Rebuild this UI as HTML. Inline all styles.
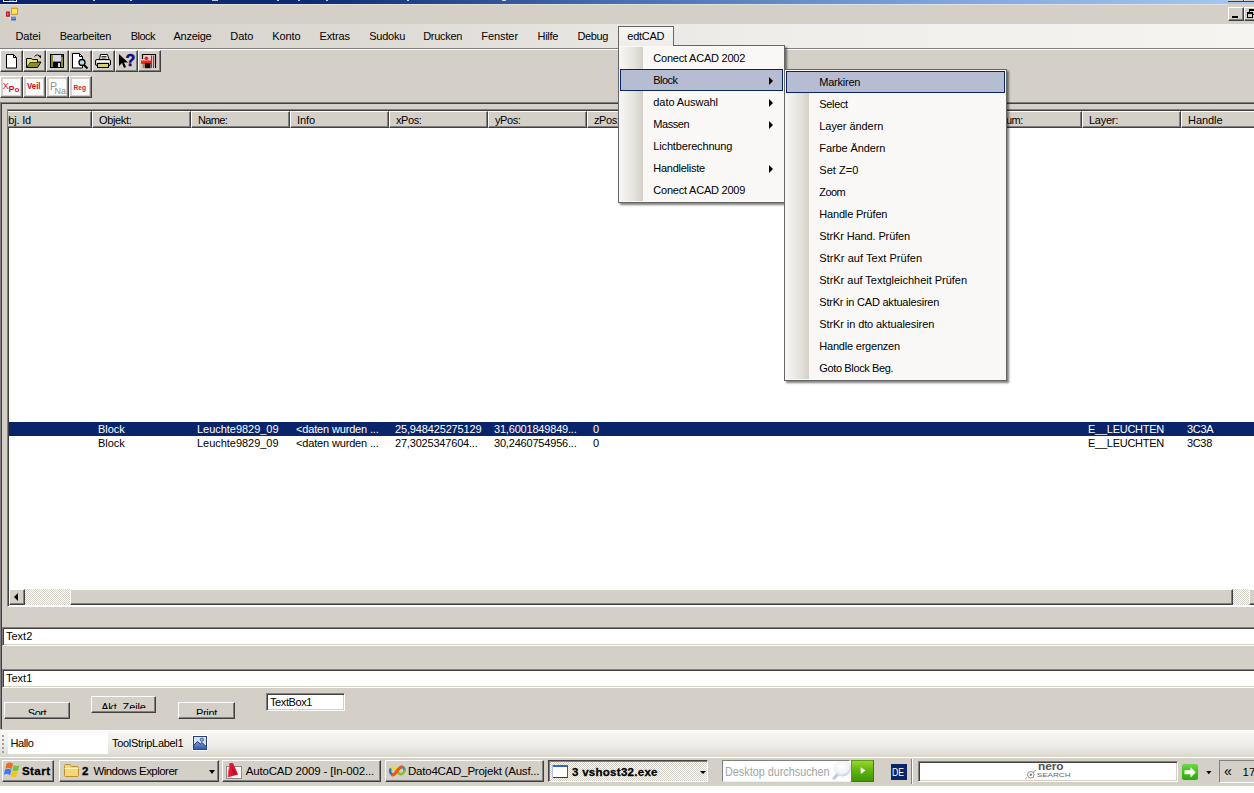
<!DOCTYPE html>
<html><head><meta charset="utf-8"><title>edtCAD</title>
<style>
*{box-sizing:border-box;margin:0;padding:0}
html,body{width:1254px;height:793px;overflow:hidden;background:#fff}
body{position:relative;font:11px "Liberation Sans",sans-serif;color:#000}
.a{position:absolute;white-space:nowrap}
#win{left:0;top:0;width:1254px;height:786px;background:#d4d0c8;overflow:hidden}
#title{left:0;top:0;width:1254px;height:4px;background:linear-gradient(90deg,#0a246a 0%,#0e2c76 25%,#4a70b4 50%,#7ea4dc 75%,#a6caf0 100%)}
#title i{position:absolute;top:0;height:1px;background:#fff;opacity:.75}
#menubar{left:0;top:24px;width:1254px;height:24px;background:linear-gradient(90deg,#d4d0c8 0%,#dedbd5 30%,#efede9 60%,#f5f4f1 100%)}
.mi{top:30px;line-height:13px}
.raised{border:1px solid;border-color:#fff #404040 #404040 #fff;box-shadow:inset -1px -1px 0 #808080}
.sunk{border:1px solid;border-color:#808080 #fff #fff #808080;box-shadow:inset 1px 1px 0 #404040,inset -1px -1px 0 #d4d0c8}
.tb{width:23px;height:22px;background:#d4d0c8;border:1px solid;border-color:#fff #404040 #404040 #fff;box-shadow:inset -1px -1px 0 #808080}
.tb svg{position:absolute;left:0;top:0}
.hd{top:1px;width:99px;height:17px;background:#d4d0c8;border:1px solid;border-color:#fff #404040 #404040 #fff;box-shadow:inset -1px -1px 0 #808080;padding-left:6px;line-height:16px;overflow:hidden}
.row{left:1px;width:1260px;height:14px;line-height:14px}
.rsel{background:#0a246a;color:#fff}
.tbx{background:#fff;padding:2px 0 0 3px;line-height:13px;overflow:hidden}
.btn{background:#d4d0c8;text-align:center;overflow:hidden;line-height:13px}
.tk{font-size:11.5px;line-height:14px}
.dd{background:#f9f8f7;border:1px solid #666;box-shadow:2px 2px 2px rgba(0,0,0,.5)}
.dd .marg{position:absolute;left:1px;top:1px;bottom:1px;width:23px;background:linear-gradient(90deg,#f7f6f4 0%,#e6e3de 60%,#d4d0c8 100%)}
.dd .it{position:absolute;left:1px;right:1px;height:22px;line-height:23px;padding-left:33.3px}
.dd .sel{background:#b6bdd2;border:1px solid #0a246a;line-height:21px;padding-left:32.3px}
.arr{position:absolute;right:10px;top:7.5px;width:0;height:0;border:4px solid transparent;border-left:4px solid #000;border-right:0}
.sel .arr{top:6.5px;right:9px}
</style></head><body>
<div id="win" class="a">
<div id="title" class="a"><i style="left:93px;width:2px"></i><i style="left:130px;width:2px"></i><i style="left:212px;width:6px"></i><i style="left:277px;width:2px"></i><i style="left:298px;width:2px"></i><i style="left:326px;width:2px"></i><i style="left:407px;width:2px"></i><i style="left:502px;width:4px"></i></div>
<div class="a" style="left:0;top:4px;width:1228px;height:1px;background:#e2e0da"></div>
<div class="a" style="left:3px;top:0;width:14px;height:2px;background:#e8ecff"></div><div class="a" style="left:4px;top:0;width:12px;height:1px;background:#101030"></div><div class="a" style="left:9px;top:0;width:5px;height:1px;background:#3050c0"></div>
<svg class="a" style="left:5px;top:7px" width="15" height="15" viewBox="0 0 15 15"><rect x="1.100" y="4.500" width="3.700" height="5.200" fill="#b00818"/><rect x="2" y="5.500" width="1.600" height="3" fill="#f86070"/><rect x="6.100" y=".7" width="6.800" height="7.100" fill="#c89808"/><rect x="7" y="1.800" width="5" height="5" fill="#ffe058"/><rect x="6" y="9.700" width="5" height="3.600" fill="#5c8ce8"/><rect x="6" y="12" width="5" height="1.300" fill="#4068c0"/><path d="M5 10.500v2h1" stroke="#f0f0f0" stroke-width=".8" fill="none"/></svg>
<div class="a" style="left:1228px;top:0;width:26px;height:1px;background:#d4d0c8"></div><div class="a" style="left:1228px;top:1px;width:26px;height:1px;background:#404040"></div><div class="a" style="left:1243px;top:0;width:1px;height:2px;background:#404040"></div><div class="a" style="left:1244px;top:0;width:1px;height:1px;background:#fff"></div>
<div class="a" style="left:1228px;top:7px;width:16px;height:14px;background:#d4d0c8;border:1px solid;border-color:#fff #404040 #404040 #fff;box-shadow:inset -1px -1px 0 #808080"><div class="a" style="left:3px;top:8px;width:6px;height:2px;background:#000"></div></div>
<div class="a" style="left:1244px;top:7px;width:15px;height:14px;background:#d4d0c8;border:1px solid;border-color:#fff #404040 #404040 #fff;box-shadow:inset -1px -1px 0 #808080"><div class="a" style="left:4px;top:1px;width:6px;height:6px;border:1px solid #000;border-top-width:2px"></div><div class="a" style="left:2px;top:4px;width:6px;height:6px;border:1px solid #000;border-top-width:2px;background:#d4d0c8"></div></div>

<div id="menubar" class="a"></div>
<div class="a mi" style="left:15.5px;letter-spacing:-0.14px">Datei</div>
<div class="a mi" style="left:59.7px;letter-spacing:-0.17px">Bearbeiten</div>
<div class="a mi" style="left:130.7px;letter-spacing:-0.52px">Block</div>
<div class="a mi" style="left:173.5px;letter-spacing:-0.27px">Anzeige</div>
<div class="a mi" style="left:230.3px;letter-spacing:-0.06px">Dato</div>
<div class="a mi" style="left:272.2px;letter-spacing:-0.09px">Konto</div>
<div class="a mi" style="left:319.5px;letter-spacing:-0.11px">Extras</div>
<div class="a mi" style="left:369.3px;letter-spacing:-0.27px">Sudoku</div>
<div class="a mi" style="left:423.2px;letter-spacing:-0.28px">Drucken</div>
<div class="a mi" style="left:481.3px;letter-spacing:-0.09px">Fenster</div>
<div class="a mi" style="left:537.5px;letter-spacing:-0.30px">Hilfe</div>
<div class="a mi" style="left:577.5px;letter-spacing:-0.38px">Debug</div>
<div class="a" style="left:0;top:48px;width:1254px;height:1px;background:#808080"></div><div class="a" style="left:0;top:49px;width:1254px;height:1px;background:#fff"></div>
<div class="a tb" style="left:0px;top:50px;background:#d4d0c8"><svg width="21" height="20" viewBox="0 0 21 20"><path d="M5.500 3.500h7l3 3v10.500h-10z" fill="#fff" stroke="#000"/><path d="M12.500 3.500v3h3" fill="none" stroke="#000"/></svg></div>

<div class="a tb" style="left:23px;top:50px;background:#d4d0c8"><svg width="21" height="20" viewBox="0 0 21 20"><path d="M2.500 7.500h5l1 1h5v3" fill="#d8d860" stroke="#000"/><path d="M2.500 16.500v-9" stroke="#000"/><path d="M2.500 16.500l3.500-5.500h11l-3.500 5.500z" fill="#8c8c20" stroke="#000"/><path d="M3.500 15v-6.500h3.500l1 1h5v1.500h-7z" fill="#e6e65a"/><path d="M10.500 5.500c1.500-2 4-2 5 0" fill="none" stroke="#000"/><path d="M14 4.500h3v3z" fill="#000"/></svg></div>

<div class="a tb" style="left:46px;top:50px;background:#d4d0c8"><svg width="21" height="20" viewBox="0 0 21 20"><rect x="3.500" y="3.500" width="13" height="13" fill="#8c8c28" stroke="#000"/><rect x="6" y="4" width="8" height="6" fill="#d8d8e8"/><rect x="6" y="11" width="8" height="6" fill="#000"/><rect x="11" y="12" width="2" height="4" fill="#d8d8d8"/><rect x="14.500" y="4" width="1" height="2" fill="#000"/></svg></div>

<div class="a tb" style="left:69px;top:50px;background:#d4d0c8"><svg width="21" height="20" viewBox="0 0 21 20"><path d="M2.500 2.500h7l3 3v11.500h-10z" fill="#fff" stroke="#000"/><path d="M9.500 2.500v3h3" fill="none" stroke="#000"/><circle cx="12" cy="11.500" r="3" fill="#a8e0e0" stroke="#000" stroke-width="1.300"/><path d="M14 14l3.500 3.500" stroke="#000" stroke-width="2"/></svg></div>

<div class="a tb" style="left:92px;top:50px;background:#d4d0c8"><svg width="21" height="20" viewBox="0 0 21 20"><path d="M6.500 8.500l1-5h7l1.500 5z" fill="#fff" stroke="#000"/><path d="M8.500 5.500h5M8.500 7h5" stroke="#000" stroke-width=".8"/><rect x="2.500" y="8.500" width="15" height="6" rx="1.500" fill="#d4d0c8" stroke="#000"/><rect x="4.500" y="12.500" width="11" height="4" fill="#c8c8a0" stroke="#000"/><rect x="9" y="13" width="5" height="3" fill="#d8d860"/><path d="M3.500 10.500h13" stroke="#fff"/></svg></div>

<div class="a tb" style="left:115px;top:50px;background:#d4d0c8"><svg width="21" height="20" viewBox="0 0 21 20"><path d="M3 3v12l3-3 2 5 2-1-2-4.500h4z" fill="#000"/><text x="9.500" y="15" font-family="Liberation Sans,sans-serif" font-weight="bold" font-size="16" fill="#0c0c84" stroke="#0c0c84" stroke-width=".5">?</text></svg></div>

<div class="a tb" style="left:138px;top:50px;background:#d4d0c8"><svg width="21" height="20" viewBox="0 0 21 20"><rect x="3.500" y="3.500" width="13" height="13.500" fill="#e4d4d0"/><path d="M3.500 8v-4.500h13v13.500" fill="none" stroke="#100000" stroke-width="1.200"/><path d="M12.500 4.500v12.500M14.500 4.500v12.500" stroke="#d01828" stroke-width="1.100"/><rect x="2" y="9.500" width="10.500" height="3.500" rx="1" fill="#ec2810"/><circle cx="7.400" cy="7.300" r="1.900" fill="#f02030"/><rect x="6" y="12.200" width="5.500" height="5" fill="#180404"/><rect x="3.500" y="13" width="2.500" height="4" fill="#a88858"/></svg></div>

<div class="a tb" style="left:0px;top:76px;background:#d4d0c8"><svg width="21" height="20" viewBox="0 0 21 20"><rect x="2" y="2" width="17" height="16" fill="#fdfcfc"/><text x="1.800" y="11.800" font-family="Liberation Sans,sans-serif" font-size="9" fill="#e01030">X</text><text x="7.500" y="15" font-family="Liberation Sans,sans-serif" font-weight="bold" font-size="9" fill="#e01030">P</text><text x="13.500" y="15" font-family="Liberation Sans,sans-serif" font-weight="bold" font-size="8" fill="#e01030">o</text></svg></div>

<div class="a tb" style="left:23px;top:76px;background:#d4d0c8"><svg width="21" height="20" viewBox="0 0 21 20"><rect x="2" y="2" width="17" height="16" fill="#fdfcfc"/><text x="3" y="12.300" font-family="Liberation Sans,sans-serif" font-weight="bold" font-size="8.500" fill="#d00020" textLength="13.500" lengthAdjust="spacingAndGlyphs">Veil</text></svg></div>

<div class="a tb" style="left:46px;top:76px;background:#d4d0c8"><svg width="21" height="20" viewBox="0 0 21 20"><rect x="2" y="2" width="17" height="16" fill="#fdfcfc"/><text x="3" y="13" font-family="Liberation Sans,sans-serif" font-size="10.500" fill="#909090">P</text><text x="7.500" y="16.700" font-family="Liberation Sans,sans-serif" font-size="9" fill="#909090">Na</text></svg></div>

<div class="a tb" style="left:69px;top:76px;background:#d4d0c8"><svg width="21" height="20" viewBox="0 0 21 20"><rect x="2" y="2" width="17" height="16" fill="#fdfcfc"/><text x="3.500" y="13" font-family="Liberation Sans,sans-serif" font-weight="bold" font-size="7.500" fill="#d01830" textLength="12.500" lengthAdjust="spacingAndGlyphs">Reg</text></svg></div>

<div class="a" style="left:0;top:102px;width:1254px;height:1px;background:#808080"></div>
<div class="a" style="left:0;top:103px;width:1254px;height:1px;background:#404040"></div>
<div class="a" style="left:0;top:103px;width:1px;height:626px;background:#808080"></div>
<div class="a" style="left:1px;top:103px;width:1px;height:626px;background:#404040"></div>
<div class="a" id="lv" style="left:7px;top:109px;width:1260px;height:498px;background:#fff;border:1px solid;border-color:#808080 #fff #fff #808080;box-shadow:inset 1px 1px 0 #404040;overflow:hidden">
<div class="a hd" style="left:-15px;letter-spacing:-0.20px">Obj. Id</div><div class="a hd" style="left:84px;letter-spacing:-0.35px">Objekt:</div><div class="a hd" style="left:183px;letter-spacing:-0.62px">Name:</div><div class="a hd" style="left:282px;letter-spacing:-0.06px">Info</div><div class="a hd" style="left:381px;letter-spacing:-0.44px">xPos:</div><div class="a hd" style="left:480px;letter-spacing:-0.44px">yPos:</div><div class="a hd" style="left:579px;letter-spacing:-0.44px">zPos:</div><div class="a hd" style="left:678px;"></div><div class="a hd" style="left:777px;"></div><div class="a hd" style="left:876px;"></div><div class="a hd" style="left:975px;letter-spacing:-0.41px">Datum:</div><div class="a hd" style="left:1074px;letter-spacing:-0.26px">Layer:</div><div class="a hd" style="left:1173px;letter-spacing:-0.06px">Handle</div>
<div class="a row rsel" style="top:312px"><span class="a" style="left:89px;letter-spacing:-0.04px">Block</span><span class="a" style="left:188px;letter-spacing:-0.03px">Leuchte9829_09</span><span class="a" style="left:287px;letter-spacing:-0.16px">&lt;daten wurden ...</span><span class="a" style="left:386px;letter-spacing:-0.15px">25,948425275129</span><span class="a" style="left:485px;letter-spacing:-0.19px">31,6001849849...</span><span class="a" style="left:584px;letter-spacing:-0.12px">0</span><span class="a" style="left:1079px;letter-spacing:-0.26px">E__LEUCHTEN</span><span class="a" style="left:1178px;letter-spacing:-0.31px">3C3A</span></div>
<div class="a row" style="top:326px"><span class="a" style="left:89px;letter-spacing:-0.04px">Block</span><span class="a" style="left:188px;letter-spacing:-0.03px">Leuchte9829_09</span><span class="a" style="left:287px;letter-spacing:-0.16px">&lt;daten wurden ...</span><span class="a" style="left:386px;letter-spacing:-0.19px">27,3025347604...</span><span class="a" style="left:485px;letter-spacing:-0.19px">30,2460754956...</span><span class="a" style="left:584px;letter-spacing:-0.12px">0</span><span class="a" style="left:1079px;letter-spacing:-0.26px">E__LEUCHTEN</span><span class="a" style="left:1178px;letter-spacing:-0.35px">3C38</span></div>
<div class="a" style="left:1px;top:479px;width:1250px;height:16px;background:repeating-conic-gradient(#fff 0 25%,#d4d0c8 0 50%) 0 0/2px 2px"></div>
<div class="a raised" style="left:1px;top:479px;width:16px;height:16px;background:#d4d0c8"><div class="a" style="left:4px;top:3px;width:0;height:0;border:4px solid transparent;border-right:4px solid #000;border-left:0"></div></div>
<div class="a raised" style="left:62px;top:479px;width:1163px;height:16px;background:#d4d0c8"></div>
<div class="a raised" style="left:1241px;top:479px;width:16px;height:16px;background:#d4d0c8"></div>
</div>

<div class="a sunk tbx" style="left:2px;top:627px;width:1260px;height:19px">Text2</div>
<div class="a sunk tbx" style="left:2px;top:669px;width:1260px;height:19px">Text1</div>
<div class="a raised btn" style="left:4px;top:702px;width:66px;height:17px"><div class="a" style="left:2px;right:2px;top:2px;height:10px;overflow:hidden;text-align:center;line-height:16px;letter-spacing:-0.40px">Sort</div></div>
<div class="a raised btn" style="left:91px;top:696px;width:65px;height:17px"><div class="a" style="left:2px;right:2px;top:2px;height:10px;overflow:hidden;text-align:center;line-height:16px;letter-spacing:-0.11px">Akt. Zeile</div></div>
<div class="a raised btn" style="left:178px;top:702px;width:57px;height:17px"><div class="a" style="left:2px;right:2px;top:2px;height:10px;overflow:hidden;text-align:center;line-height:16px;letter-spacing:-0.35px">Print</div></div>
<div class="a sunk tbx" style="left:266px;top:693px;width:79px;height:18px;letter-spacing:-0.41px">TextBox1</div>

<div class="a" style="left:0;top:730px;width:1254px;height:27px;background:linear-gradient(180deg,#fdfcfb 0%,#f5f4f1 15%,#eeece8 55%,#e2dfd8 85%,#d8d5cb 100%)"></div>
<div class="a" style="left:2px;top:735px;width:2px;height:18px;background:repeating-linear-gradient(180deg,#a0a0a0 0 2px,transparent 2px 4px)"></div>
<div class="a" style="left:8px;top:733px;width:100px;height:21px;background:#fff;padding-left:2.500px;line-height:20px;letter-spacing:-0.42px">Hallo</div>
<div class="a" style="left:112px;top:733px;line-height:20px;letter-spacing:-0.30px">ToolStripLabel1</div>
<svg class="a" style="left:192px;top:735px" width="16" height="16" viewBox="0 0 16 16"><defs><linearGradient id="ig" x1="0" y1="0" x2="0" y2="1"><stop offset="0" stop-color="#7c9ce0"/><stop offset="1" stop-color="#2c54a8"/></linearGradient></defs><rect width="16" height="16" fill="#fcfdff"/><rect x="1.500" y="1.500" width="13" height="13" fill="#d4e4fa" stroke="#2c4070"/><path d="M2 10.500l3.500-4 2.800 2.500 1.700-1.500 4.500 4.500v2.500h-12.500z" fill="url(#ig)"/><path d="M2 10l3.500-3.500 2.800 2.500 1.700-1.500 4.500 4.500" fill="none" stroke="#20305c" stroke-width="1"/><circle cx="9.900" cy="4.700" r="1.600" fill="#a8c0ec" stroke="#2c4c90" stroke-width=".9"/></svg>

<div class="a" style="left:0;top:757px;width:1254px;height:1px;background:#fff"></div>
<div class="a raised" style="left:2px;top:760px;width:52px;height:22px;background:#d4d0c8"></div>
<svg class="a" style="left:4px;top:762px" width="17" height="16" viewBox="0 0 17 16"><path d="M2.600 1.500c2.200-1.500 4.200-1.200 6.500 .3l-1.400 5.400c-2.200-1.500-4.200-1.700-6.500-.3z" fill="#ee6a28"/><path d="M9.800 3c2 1.200 3.800 1.200 5.800 0l-1.400 5.300c-2 1.200-3.800 1.200-5.800 0z" fill="#6cc83c"/><path d="M1 7.800c2.200-1.400 4.200-1.200 6.400 .3l-1.300 5.200c-2.200-1.500-4.200-1.700-6.400-.3z" fill="#3c7ce8"/><path d="M8 9c2 1.200 3.800 1.200 5.900 0l-1.300 5.200c-2 1.200-3.900 1.200-5.900 0z" fill="#f4c41c"/></svg>
<div class="a tk" style="left:21.900px;top:764px;font-weight:bold;-webkit-text-stroke:.3px #000;letter-spacing:0.48px">Start</div>
<div class="a raised" style="left:59px;top:760px;width:160px;height:22px;background:#d4d0c8"></div>
<svg class="a" style="left:63px;top:762px" width="17" height="16" viewBox="0 0 17 16"><path d="M1.500 4.500c0-1 .5-2 1.500-2h4l1.500 2h6c.8 0 1 .5 1 1v8c0 .6-.4 1-1 1h-12c-.6 0-1-.4-1-1z" fill="#f4d878" stroke="#b8902c"/><path d="M1.500 6.500h14" stroke="#fff2b8" /></svg>
<div class="a tk" style="left:82px;top:764px;font-weight:bold;-webkit-text-stroke:.3px #000">2</div><div class="a tk" style="left:93.400px;top:764px;letter-spacing:-0.53px">Windows Explorer</div>
<div class="a" style="left:209px;top:770px;width:0;height:0;border:3.500px solid transparent;border-top:4px solid #000;border-bottom:0"></div>
<div class="a raised" style="left:222px;top:760px;width:159px;height:22px;background:#d4d0c8"></div>
<svg class="a" style="left:226px;top:762px" width="17" height="17" viewBox="0 0 17 17"><rect x=".5" y="4.500" width="15" height="12" fill="#f8f6f4" stroke="#8c8c88"/><path d="M3.800 1h3.200l5.200 11.500-10.200 2.700z" fill="#e01838"/><path d="M5.500 3l5.500 9-4 1z" fill="#b00820" opacity=".6"/><path d="M3.800 1.500l-1.800 13.500" stroke="#f04060" stroke-width="1" fill="none"/></svg>
<div class="a tk" style="left:245.700px;top:764px;letter-spacing:-0.16px">AutoCAD 2009 - [In-002...</div>
<div class="a raised" style="left:385px;top:760px;width:159px;height:22px;background:#d4d0c8"></div>
<svg class="a" style="left:388px;top:764px" width="18" height="14" viewBox="0 0 18 14"><g fill="none" stroke-linecap="round"><path d="M9 6.500C7.500 3 3.500 2.500 2.300 5.500" stroke="#e4e028" stroke-width="2.600"/><path d="M2.300 5.500C1.500 9 3.500 11 6 10.500" stroke="#2c78b0" stroke-width="2.600"/><path d="M12.500 3C15 2.500 17 4.500 16.300 7" stroke="#4088c8" stroke-width="2.600"/><path d="M16.300 7C15.500 10.500 12 11.500 10 8.500" stroke="#84c030" stroke-width="2.600"/><path d="M4.500 10.800C8 11 9.500 4 13 3.200" stroke="#f05810" stroke-width="3.200"/></g></svg>
<div class="a tk" style="left:408px;top:764px;letter-spacing:-0.22px">Dato4CAD_Projekt (Ausf...</div>
<div class="a" style="left:548px;top:760px;width:160px;height:22px;background:repeating-conic-gradient(#fff 0 25%,#d4d0c8 0 50%) 0 0/2px 2px;border:1px solid;border-color:#404040 #fff #fff #404040;box-shadow:inset 1px 1px 0 #808080"></div>
<svg class="a" style="left:551px;top:764px" width="18" height="15" viewBox="0 0 18 15"><rect x="1.500" y="1.500" width="15" height="12" fill="#fffdf8" stroke="#a8c4ec"/><path d="M2 2h15" stroke="#2c6cc8" stroke-width="2"/><path d="M16.500 2v11.500" stroke="#3058a8"/><path d="M2 13.500h15" stroke="#203c80"/></svg>
<div class="a tk" style="left:572px;top:765px;font-weight:bold;-webkit-text-stroke:.3px #000;letter-spacing:0.28px">3 vshost32.exe</div>
<div class="a" style="left:700px;top:771px;width:0;height:0;border:3px solid transparent;border-top:3.500px solid #000;border-bottom:0"></div>
<div class="a" style="left:722px;top:760px;width:128px;height:22px;background:#fff;border:1px solid;border-color:#808080 #f0f0f0 #f0f0f0 #808080;color:#a4a4a4;font-size:12.500px;line-height:22.500px;padding-left:1.600px"><span style="display:inline-block;transform-origin:0 50%;transform:scaleX(0.8651)">Desktop durchsuchen</span></div>
<svg class="a" style="left:831px;top:761px" width="20" height="20" viewBox="0 0 20 20"><defs><radialGradient id="mg" cx=".45" cy=".4" r=".6"><stop offset="0" stop-color="#fff"/><stop offset=".7" stop-color="#f0f3f8"/><stop offset="1" stop-color="#c4cce0"/></radialGradient></defs><rect width="20" height="20" fill="#fff"/><path d="M1 17.500l4.500-5.500 2.500 2-4.500 5z" fill="#c0c8e0"/><circle cx="11.500" cy="7" r="8.500" fill="url(#mg)"/></svg>
<div class="a" style="left:851px;top:760px;width:23px;height:22px;background:linear-gradient(180deg,#98d62c 0%,#64b60e 45%,#3c9802 100%);border:1px solid;border-color:#5c9c1c #3c7c0c #3c7c0c #5c9c1c"></div><svg class="a" style="left:860px;top:766px" width="7" height="9" viewBox="0 0 7 9"><path d="M.7 1.200l4.800 3.400-4.800 3.400z" fill="#fff"/></svg>
<div class="a" style="left:891px;top:764px;width:16px;height:16px;background:#0a246a;color:#fff;font-size:11px;line-height:16.500px;padding-left:1.200px"><span style="display:inline-block;transform-origin:0 50%;transform:scaleX(0.7984)">DE</span></div>
<div class="a" style="left:911px;top:759px;width:1px;height:25px;background:#808080"></div><div class="a" style="left:912px;top:759px;width:1px;height:25px;background:#fff"></div>
<div class="a sunk" style="left:918px;top:761px;width:260px;height:21px;background:#fff"></div>
<svg class="a" style="left:1020px;top:762px" width="60" height="18" viewBox="0 0 60 18"><text x="18" y="8" font-family="Liberation Sans,sans-serif" font-weight="bold" font-size="10.500" fill="#505050" textLength="25.600" lengthAdjust="spacingAndGlyphs">nero</text><text x="16.800" y="15.400" font-family="Liberation Sans,sans-serif" font-size="6" fill="#686868" textLength="33.800" lengthAdjust="spacingAndGlyphs">SEARCH</text><circle cx="10.800" cy="12.800" r="3.300" fill="none" stroke="#808080" stroke-width=".9"/><circle cx="10.800" cy="12.800" r="1.200" fill="#808080"/><path d="M13 10.500l3-2.500M7 15.500l-1.500 1" stroke="#808080" stroke-width=".8"/></svg>
<div class="a" style="left:1182px;top:764px;width:16px;height:16px;border-radius:2.500px;background:linear-gradient(180deg,#6cd848 0%,#40c018 50%,#30a810 100%);box-shadow:0 0 1px #70d050"></div>
<svg class="a" style="left:1184px;top:766px" width="13" height="12" viewBox="0 0 13 12"><path d="M.5 4.200h6v-3.200l5.300 5.200-5.300 5.200v-3.200h-6z" fill="#fff"/></svg>
<svg class="a" style="left:1205px;top:770px" width="8" height="5" viewBox="0 0 8 5"><path d="M1.200 1h5.200l-2.600 3.200z" fill="#000"/></svg>
<div class="a" style="left:1219px;top:760px;width:40px;height:23px;border:1px solid;border-color:#808080 #fff #fff #808080"></div>
<div class="a" style="left:1224px;top:763px;font-size:14px;line-height:16px;letter-spacing:0.60px">«</div><div class="a tk" style="left:1242.600px;top:765px">17</div>

<div class="a dd" style="left:618px;top:45px;width:167px;height:158px"><div class="marg"></div>
<div class="it" style="top:1px;letter-spacing:-0.22px">Conect ACAD 2002</div><div class="it sel" style="top:23px;letter-spacing:-0.56px">Block<i class=arr></i></div><div class="it" style="top:45px;letter-spacing:-0.07px">dato Auswahl<i class=arr></i></div><div class="it" style="top:67px;letter-spacing:-0.46px">Massen<i class=arr></i></div><div class="it" style="top:89px;letter-spacing:-0.16px">Lichtberechnung</div><div class="it" style="top:111px;letter-spacing:-0.26px">Handleliste<i class=arr></i></div><div class="it" style="top:133px;letter-spacing:-0.22px">Conect ACAD 2009</div></div>
<div class="a" style="left:618px;top:26px;width:56px;height:20px;background:linear-gradient(180deg,#f7f6f4,#efede9);border:1px solid #666;border-bottom:0"></div><div class="a mi" style="left:627.300px;letter-spacing:-0.26px">edtCAD</div>
<div class="a dd" style="left:784px;top:69px;width:223px;height:312px"><div class="marg"></div>
<div class="it sel" style="top:1px;letter-spacing:-0.24px">Markiren</div><div class="it" style="top:23px;letter-spacing:-0.35px">Select</div><div class="it" style="top:45px;letter-spacing:-0.07px">Layer ändern</div><div class="it" style="top:67px;letter-spacing:-0.11px">Farbe Ändern</div><div class="it" style="top:89px;letter-spacing:0.05px">Set Z=0</div><div class="it" style="top:111px;letter-spacing:-0.58px">Zoom</div><div class="it" style="top:133px;letter-spacing:-0.18px">Handle Prüfen</div><div class="it" style="top:155px;letter-spacing:-0.12px">StrKr Hand. Prüfen</div><div class="it" style="top:177px;letter-spacing:0.04px">StrKr auf Text Prüfen</div><div class="it" style="top:199px;letter-spacing:-0.02px">StrKr auf Textgleichheit Prüfen</div><div class="it" style="top:221px;letter-spacing:-0.22px">StrKr in CAD aktualesiren</div><div class="it" style="top:243px;letter-spacing:-0.10px">StrKr in dto aktualesiren</div><div class="it" style="top:265px;letter-spacing:-0.21px">Handle ergenzen</div><div class="it" style="top:287px;letter-spacing:-0.37px">Goto Block Beg.</div></div>

</div>
</body></html>
